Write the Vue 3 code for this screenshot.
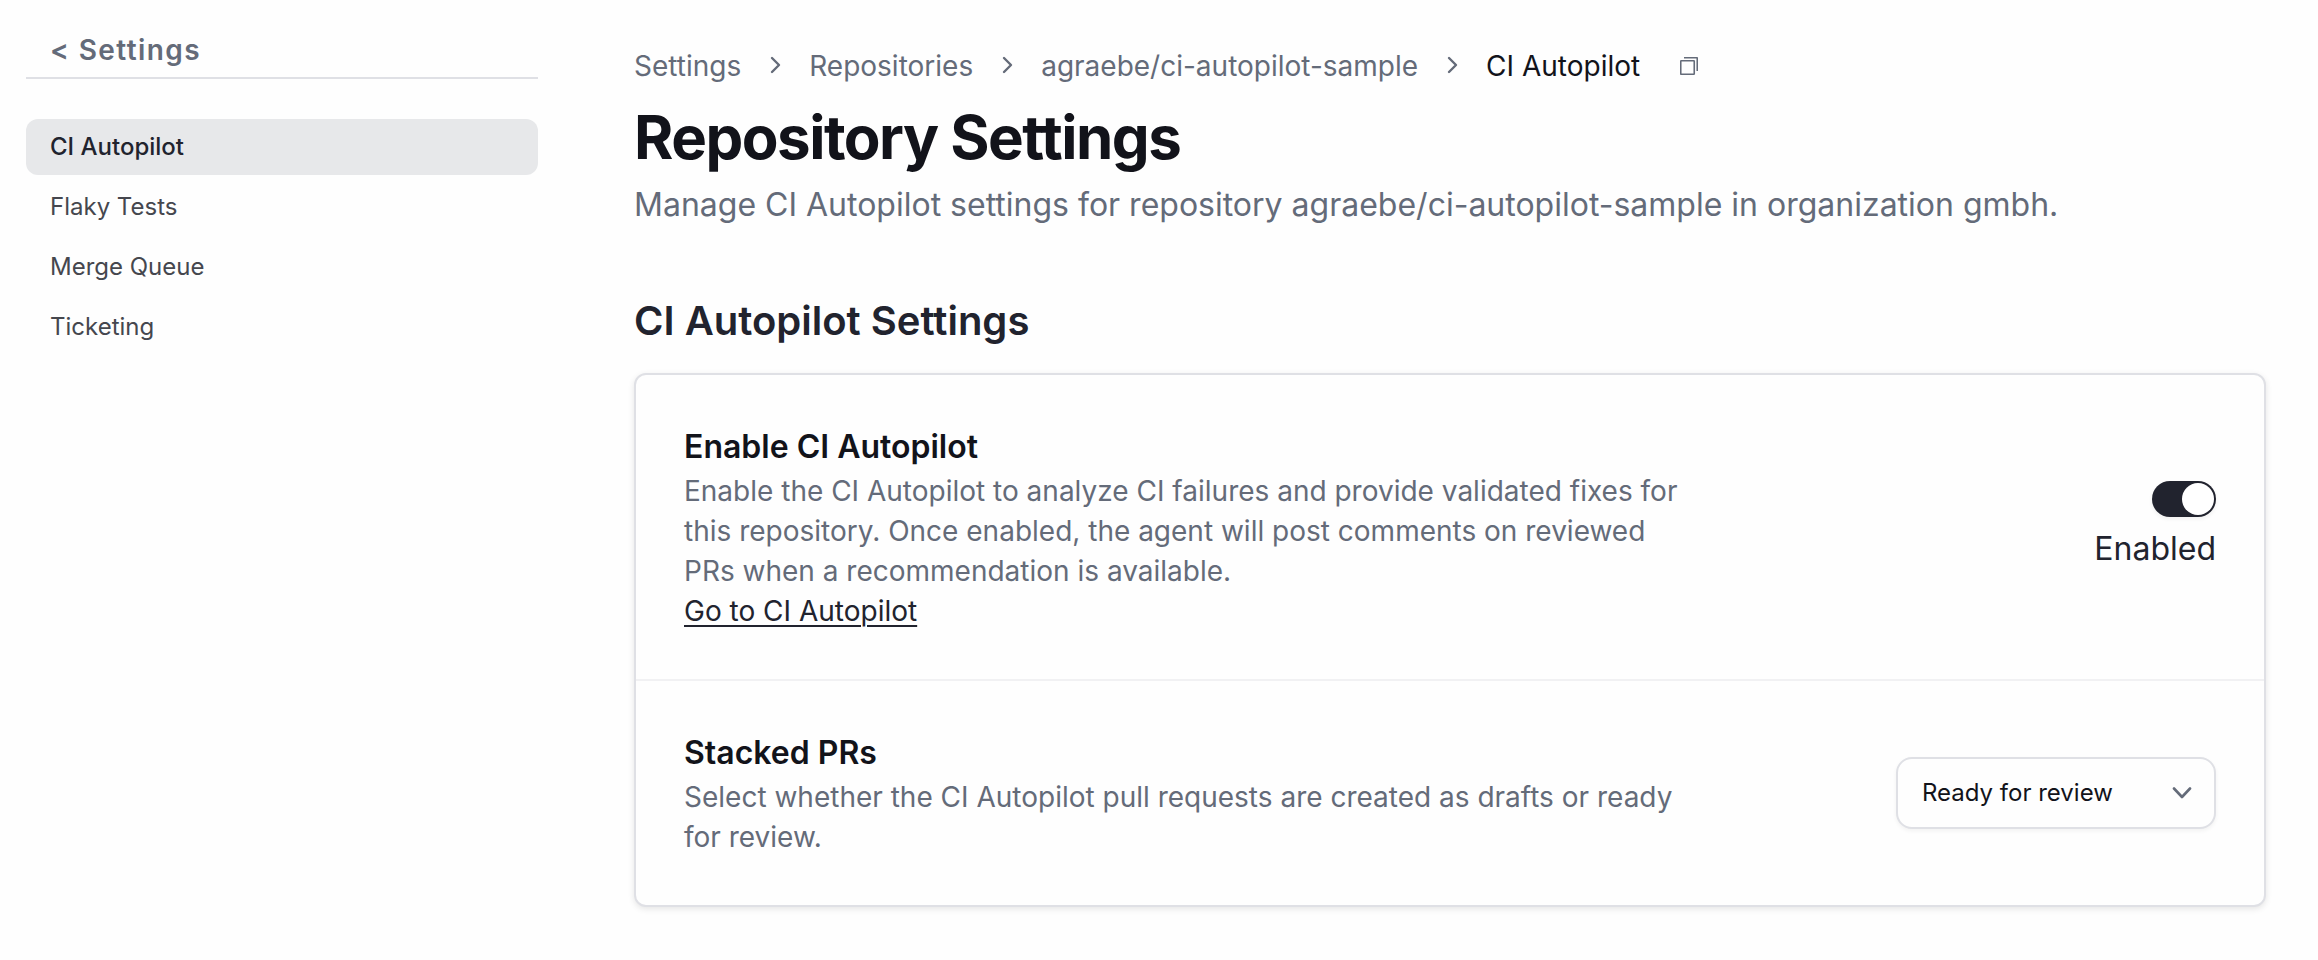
<script setup>
import { ref } from 'vue'

const navItems = [
  { label: 'CI Autopilot', active: true },
  { label: 'Flaky Tests', active: false },
  { label: 'Merge Queue', active: false },
  { label: 'Ticketing', active: false },
]
const crumbs = ['Settings', 'Repositories', 'agraebe/ci-autopilot-sample']
const enabled = ref(true)
const prMode = ref('ready')
</script>

<template>
  <div class="page">
    <aside class="sidebar">
      <a class="back" href="#">&lt; Settings</a>
      <nav class="nav" aria-label="Repository settings">
        <a
          v-for="item in navItems"
          :key="item.label"
          href="#"
          class="nav-item"
          :class="{ active: item.active }"
          :aria-current="item.active ? 'page' : undefined"
        >{{ item.label }}</a>
      </nav>
    </aside>

    <main class="main">
      <nav class="crumbs" aria-label="Breadcrumb">
        <template v-for="crumb in crumbs" :key="crumb">
          <a href="#">{{ crumb }}</a>
          <svg class="crumb-sep" viewBox="0 0 28 28" aria-hidden="true">
            <path d="M11 20l7-7-7-7" />
          </svg>
        </template>
        <span class="current" aria-current="page">CI Autopilot</span>
        <button class="copy" type="button" aria-label="Copy path">
          <svg viewBox="0 0 18 18" aria-hidden="true">
            <rect x="0.75" y="3.75" width="13.5" height="13.5" rx="0.5" />
            <path d="M4 0.75h12.75a0.5 0.5 0 0 1 0.5 0.5V14" />
          </svg>
        </button>
      </nav>

      <h1>Repository Settings</h1>
      <p class="lead">Manage CI Autopilot settings for repository agraebe/ci-autopilot-sample in organization gmbh.</p>

      <h2>CI Autopilot Settings</h2>
      <section class="card">
        <div class="row">
          <div class="info">
            <h3><label for="enable">Enable CI Autopilot</label></h3>
            <p>Enable the CI Autopilot to analyze CI failures and provide validated fixes for this repository. Once enabled, the agent will post comments on reviewed PRs when a recommendation is available.</p>
            <a class="go" href="#">Go to CI Autopilot</a>
          </div>
          <div class="toggle">
            <input id="enable" v-model="enabled" class="switch" type="checkbox" role="switch" />
            <span class="state">{{ enabled ? 'Enabled' : 'Disabled' }}</span>
          </div>
        </div>
        <div class="row">
          <div class="info">
            <h3><label for="pr-mode">Stacked PRs</label></h3>
            <p>Select whether the CI Autopilot pull requests are created as drafts or ready for review.</p>
          </div>
          <div class="select-wrap">
            <select id="pr-mode" v-model="prMode">
              <option value="ready">Ready for review</option>
              <option value="draft">Draft</option>
            </select>
            <svg class="caret" viewBox="0 0 20 12" aria-hidden="true">
              <path d="M2 1.5l8 8.5 8-8.5" />
            </svg>
          </div>
        </div>
      </section>
    </main>
  </div>
</template>

<style>
body {
  background: #fefefe;
}
</style>

<style scoped>
.page {
  display: flex;
  gap: 96px;
  padding: 30px 52px 52px 26px;
  font-family: Inter, "Liberation Sans", sans-serif;
  font-size: 28px;
  line-height: 40px;
  color: #21232e;
}
.page * {
  box-sizing: border-box;
}
a {
  color: inherit;
  text-decoration: none;
}
h1, h2, h3, p {
  margin: 0;
}
.sidebar {
  flex: 0 0 512px;
}
.back {
  display: block;
  padding: 0 24px 7px;
  border-bottom: 2px solid #dfe0e5;
  font-weight: 600;
  letter-spacing: 0.05em;
  color: #646b79;
}
.nav {
  display: flex;
  flex-direction: column;
  gap: 4px;
  margin-top: 40px;
}
.nav-item {
  padding: 8px 24px;
  border-radius: 12px;
  font-size: 24px;
  color: #45474e;
}
.nav-item.active {
  background: #e7e8ea;
  font-weight: 500;
  color: #21232e;
}
.main {
  flex: 1;
  min-width: 0;
  padding-top: 16px;
}
.crumbs {
  display: flex;
  align-items: center;
  gap: 20px;
  color: #646b79;
}
.crumb-sep {
  width: 28px;
  height: 28px;
  fill: none;
  stroke: currentColor;
  stroke-width: 2.4;
  stroke-linecap: round;
  stroke-linejoin: round;
}
.current {
  color: #12131a;
}
.copy {
  display: flex;
  margin-left: 12px;
  padding: 8px;
  border: 0;
  background: none;
  color: inherit;
}
.copy svg {
  width: 18px;
  height: 18px;
  fill: none;
  stroke: currentColor;
  stroke-width: 1.6;
}
h1 {
  margin-top: 15px;
  font-size: 60px;
  font-weight: 700;
  line-height: 72px;
  letter-spacing: -0.025em;
  color: #12131a;
}
.lead {
  margin-top: 8px;
  font-size: 32px;
  line-height: 48px;
  color: #646b79;
}
h2 {
  margin-top: 64px;
  font-size: 40px;
  font-weight: 600;
  line-height: 56px;
}
.card {
  margin-top: 24px;
  border: 2px solid #dfe0e5;
  border-radius: 12px;
  background: #fefefe;
  box-shadow: 0 2px 6px rgba(0, 0, 0, 0.1);
}
.row {
  display: flex;
  align-items: center;
  justify-content: space-between;
  gap: 48px;
  padding: 48px;
}
.row + .row {
  border-top: 2px solid #f1f1f3;
}
.info {
  max-width: 1008px;
}
.info h3 {
  font-size: 32px;
  font-weight: 600;
  line-height: 48px;
  color: #12131a;
}
.info p {
  color: #646b79;
}
.go {
  display: block;
  width: fit-content;
  text-decoration: underline;
  text-decoration-thickness: 2px;
  text-underline-offset: 4px;
}
.toggle {
  display: flex;
  flex-direction: column;
  align-items: flex-end;
  gap: 8px;
}
.switch {
  appearance: none;
  display: flex;
  width: 64px;
  height: 36px;
  margin: 0;
  padding: 2px;
  border-radius: 18px;
  background: #c9ccd3;
  box-shadow: 0 2px 4px rgba(0, 0, 0, 0.06);
}
.switch::before {
  content: "";
  width: 32px;
  height: 32px;
  border-radius: 50%;
  background: #fff;
}
.switch:checked {
  justify-content: flex-end;
  background: #21232e;
}
.state {
  font-size: 32px;
  line-height: 48px;
}
.select-wrap {
  display: grid;
  align-items: center;
  width: 320px;
}
.select-wrap > * {
  grid-area: 1 / 1;
}
select {
  appearance: none;
  width: 100%;
  height: 72px;
  padding: 0 64px 0 24px;
  border: 2px solid #dfe0e5;
  border-radius: 16px;
  background: #fefefe;
  box-shadow: 0 2px 4px rgba(0, 0, 0, 0.05);
  font: inherit;
  font-size: 24px;
  color: #12131a;
}
.caret {
  justify-self: end;
  width: 20px;
  height: 12px;
  margin-right: 24px;
  fill: none;
  stroke: #646b79;
  stroke-width: 2.6;
  stroke-linecap: round;
  stroke-linejoin: round;
  pointer-events: none;
}
</style>
